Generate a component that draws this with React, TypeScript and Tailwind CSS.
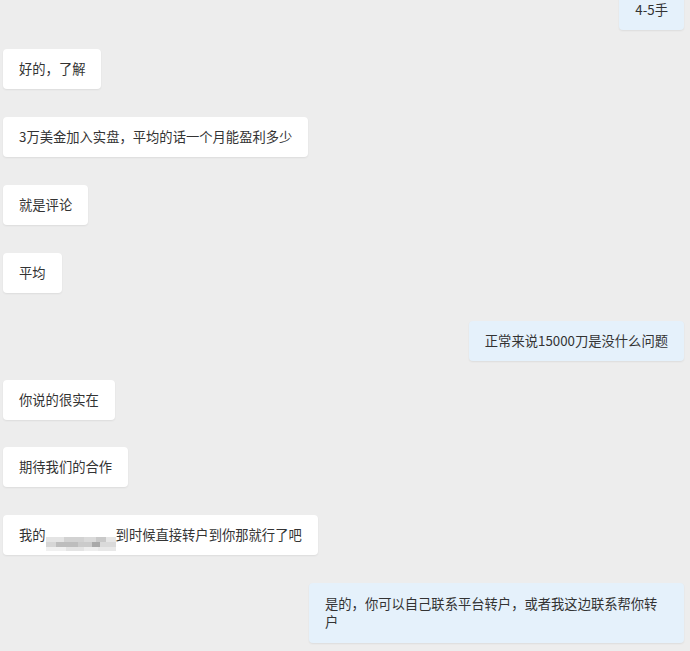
import React from "react";

type Msg = {
    side: "left" | "right";
    text: React.ReactNode;
    mt: string;
    wide?: boolean;
};

function Blurred() {
    // pixelated, redacted chunk of text
    return (
        <span className="inline-flex h-[14px] w-[70px] align-[-2px] flex-col overflow-hidden leading-none">
            <span className="flex h-[5px]">
                <span className="w-[18px] bg-[#e4e4e4]" />
                <span className="w-[20px] bg-[#d2d2d2]" />
                <span className="w-[12px] bg-[#dadada]" />
                <span className="w-[10px] bg-[#c9c9c9]" />
                <span className="w-[10px] bg-[#e6e6e6]" />
            </span>
            <span className="flex h-[5px]">
                <span className="w-[10px] bg-[#d6d6d6]" />
                <span className="w-[22px] bg-[#bdbdbd]" />
                <span className="w-[14px] bg-[#cbcbcb]" />
                <span className="w-[8px] bg-[#a9a9a9]" />
                <span className="w-[16px] bg-[#dadada]" />
            </span>
            <span className="flex h-[4px]">
                <span className="w-[20px] bg-[#f0f0f0]" />
                <span className="w-[18px] bg-[#e4e4e4]" />
                <span className="w-[14px] bg-[#eeeeee]" />
                <span className="w-[18px] bg-[#e8e8e8]" />
            </span>
        </span>
    );
}

const messages: Msg[] = [
    { side: "right", text: "4-5手", mt: "mt-[-10px]" },
    { side: "left", text: "好的，了解", mt: "mt-[19px]" },
    { side: "left", text: "3万美金加入实盘，平均的话一个月能盈利多少", mt: "mt-[28px]" },
    { side: "left", text: "就是评论", mt: "mt-[28px]" },
    { side: "left", text: "平均", mt: "mt-[28px]" },
    { side: "right", text: "正常来说15000刀是没什么问题", mt: "mt-[28px]" },
    { side: "left", text: "你说的很实在", mt: "mt-[19px]" },
    { side: "left", text: "期待我们的合作", mt: "mt-[27px]" },
    {
        side: "left",
        text: (
            <>
                我的
                <Blurred />
                到时候直接转户到你那就行了吧
            </>
        ),
        mt: "mt-[28px]",
    },
    {
        side: "right",
        text: "是的，你可以自己联系平台转户，或者我这边联系帮你转户",
        mt: "mt-[28px]",
        wide: true,
    },
];

export default function App() {
    return (
        <div
            className="w-[690px] h-[651px] overflow-hidden bg-[#ededed] text-[#333333]"
            style={{ fontFamily: '"Noto Sans CJK SC", "Noto Sans", sans-serif' }}
        >
            <div className="flex flex-col pl-[3px] pr-[6px]">
                {messages.map((m, i) => (
                    <div
                        key={i}
                        className={`flex ${m.mt} ${m.side === "right" ? "justify-end" : "justify-start"}`}
                    >
                        <div
                            className={`rounded-[4px] px-[16px] text-[13.3px] shadow-[0_1px_2px_rgba(0,0,0,0.07)] ${
                                m.wide
                                    ? "w-[375px] py-[12px] leading-[18px]"
                                    : "h-[40px] py-[11px] leading-[18px] whitespace-nowrap"
                            } ${m.side === "right" ? "bg-[#e5f1fb]" : "bg-white"}`}
                        >
                            {m.text}
                        </div>
                    </div>
                ))}
            </div>
        </div>
    );
}
